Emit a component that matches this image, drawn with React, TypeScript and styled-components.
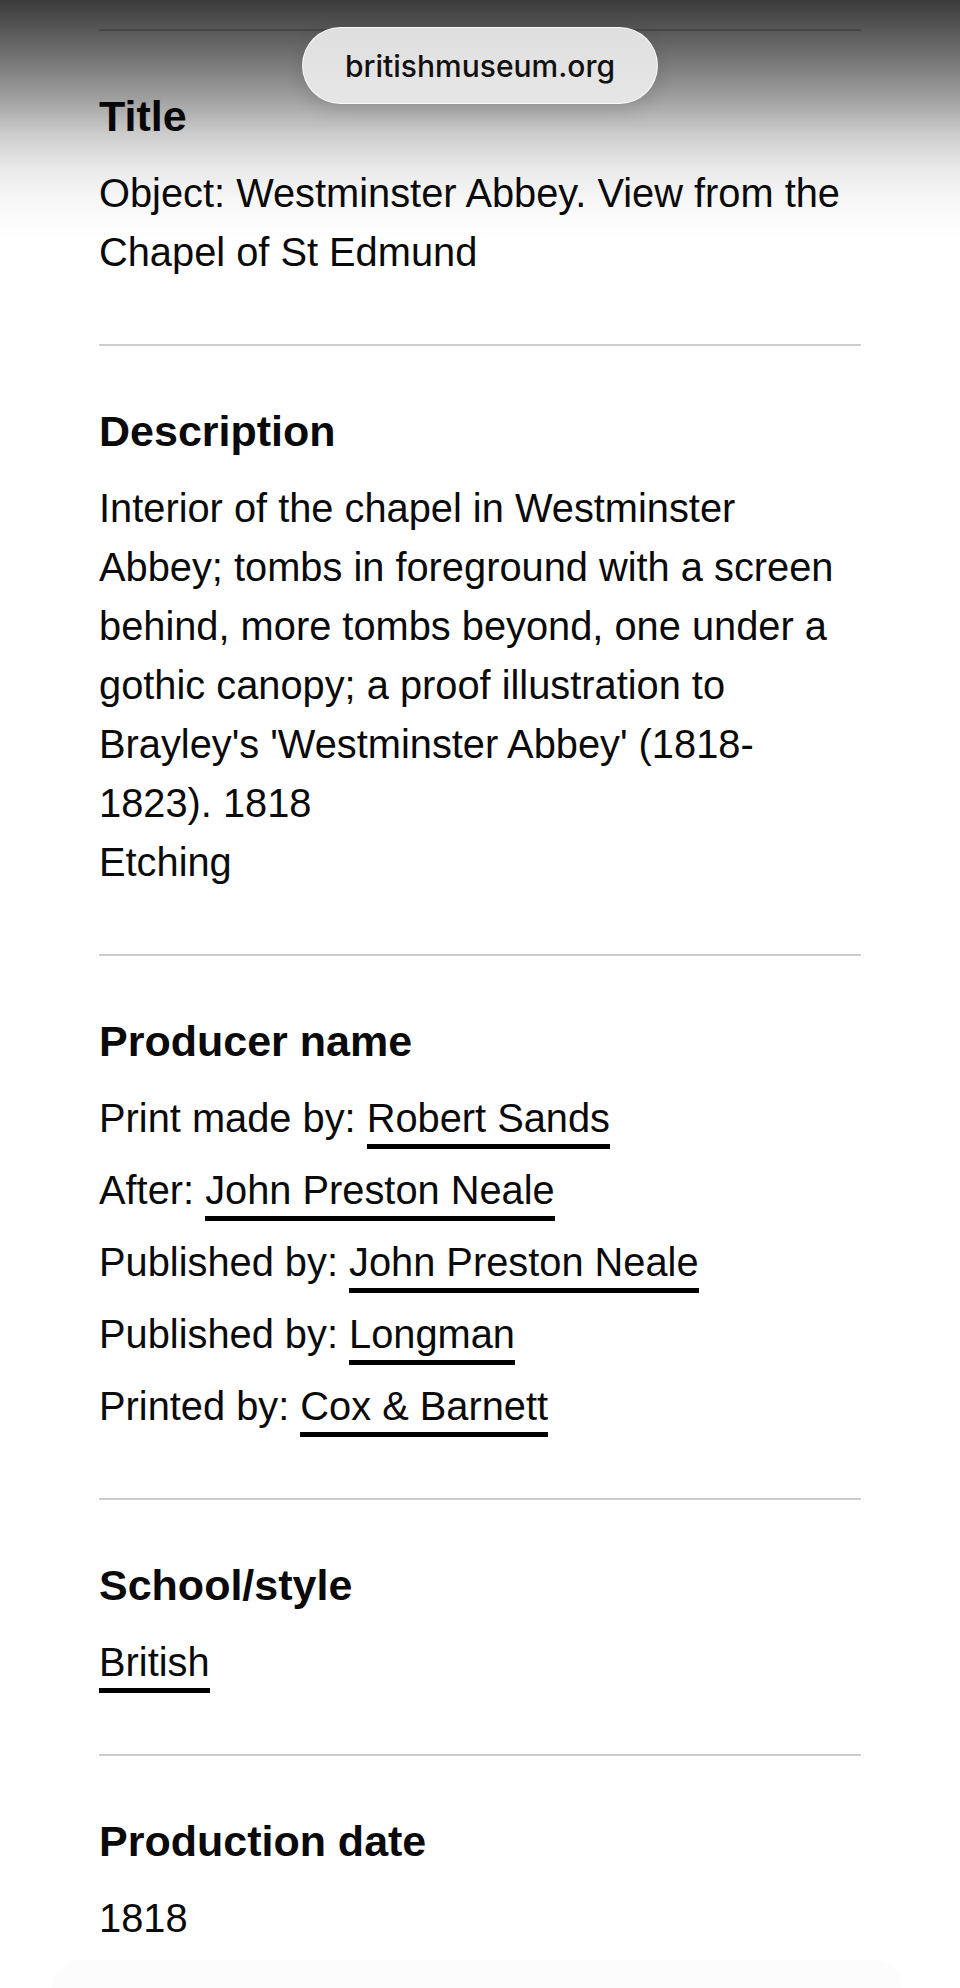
import React from "react";
import styled, { createGlobalStyle } from "styled-components";

const GlobalStyle = createGlobalStyle`
  html, body {
    margin: 0;
    padding: 0;
    background: #fff;
  }
  body {
    font-family: "Liberation Sans", Arial, Helvetica, sans-serif;
    color: #000;
  }
`;

const producers = [
  { role: "Print made by", name: "Robert Sands" },
  { role: "After", name: "John Preston Neale" },
  { role: "Published by", name: "John Preston Neale" },
  { role: "Published by", name: "Longman" },
  { role: "Printed by", name: "Cox & Barnett" },
];

export default function App() {
  return (
    <Screen>
      <GlobalStyle />
      <Content>
        <Section>
          <Heading>Title</Heading>
          <Text>Object: Westminster Abbey. View from the Chapel of St Edmund</Text>
        </Section>

        <Section>
          <Heading>Description</Heading>
          <Text>
            Interior of the chapel in Westminster Abbey; tombs in foreground
            with a screen behind, more tombs beyond, one under a gothic canopy;
            a proof illustration to Brayley's 'Westminster Abbey' (1818-
            <wbr />
            1823). 1818
            <br />
            Etching
          </Text>
        </Section>

        <Section>
          <Heading>Producer name</Heading>
          <RowList>
            {producers.map((p, i) => (
              <Text key={i}>
                {p.role}: <Link href="#">{p.name}</Link>
              </Text>
            ))}
          </RowList>
        </Section>

        <Section>
          <Heading>School/style</Heading>
          <Text>
            <Link href="#">British</Link>
          </Text>
        </Section>

        <Section>
          <Heading>Production date</Heading>
          <Text>1818</Text>
        </Section>
      </Content>

      <TopShade />
      <AddressPill>britishmuseum.org</AddressPill>
      <BottomBar />
    </Screen>
  );
}

const Screen = styled.div`
  position: relative;
  height: 1988px;
  overflow: hidden;
  background: #fff;
`;

const Content = styled.main`
  width: 762px;
  padding: 29px 0 0 99px;
`;

const Section = styled.section`
  border-top: 2px solid #cdcdcd;
  padding: 60px 0 62px;
`;

const Heading = styled.h2`
  margin: 0 0 23px;
  font-size: 43px;
  line-height: 50px;
  font-weight: 700;
  color: #0a0a0a;
`;

const Text = styled.p`
  margin: 0;
  padding-right: 4px;
  font-size: 39.8px;
  line-height: 59px;
  color: #0a0a0a;
`;

const RowList = styled.div`
  display: flex;
  flex-direction: column;
  gap: 13px;
`;

const Link = styled.a`
  color: inherit;
  text-decoration: none;
  padding-bottom: 4px;
  border-bottom: 5px solid #000;
`;

const TopShade = styled.div`
  position: absolute;
  top: 0;
  left: 0;
  right: 0;
  height: 250px;
  pointer-events: none;
  z-index: 1;
  background: linear-gradient(
    to bottom,
    rgba(0, 0, 0, 0.77) 0px,
    rgba(0, 0, 0, 0.6) 45px,
    rgba(0, 0, 0, 0.37) 100px,
    rgba(0, 0, 0, 0.2) 134px,
    rgba(0, 0, 0, 0.09) 167px,
    rgba(0, 0, 0, 0.03) 200px,
    rgba(0, 0, 0, 0) 240px
  );
`;

const AddressPill = styled.div`
  position: absolute;
  top: 27px;
  left: 50%;
  transform: translateX(-50%);
  z-index: 2;
  box-sizing: border-box;
  width: 356px;
  height: 77px;
  border-radius: 39px;
  border: 1.5px solid rgba(255, 255, 255, 0.8);
  background: linear-gradient(to bottom, #dfdfdf, #e6e6e6);
  box-shadow: 0 6px 18px rgba(0, 0, 0, 0.12);
  display: flex;
  align-items: center;
  justify-content: center;
  font-family: Inter, "Liberation Sans", sans-serif;
  font-weight: 500;
  font-size: 30px;
  color: #111;
`;

const BottomBar = styled.div`
  position: absolute;
  left: 52px;
  right: 58px;
  bottom: 0;
  height: 28px;
  border-radius: 36px 36px 0 0;
  background: #fcfcfc;
`;
